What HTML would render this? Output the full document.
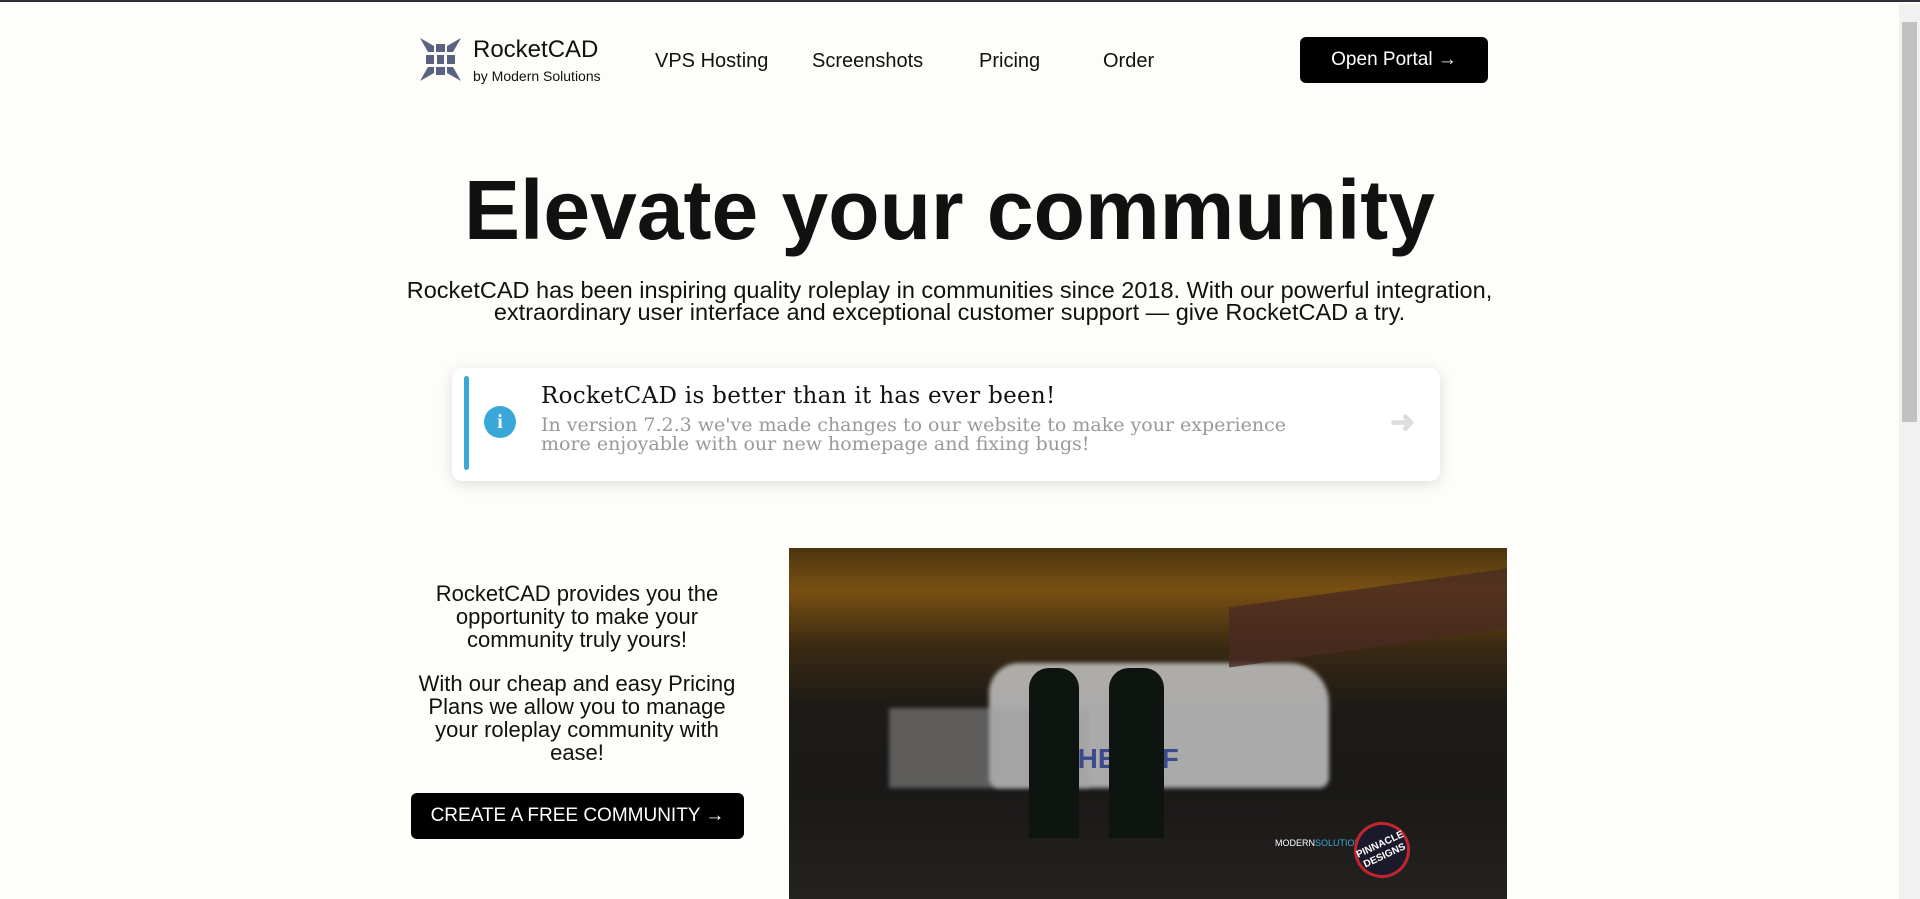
<!DOCTYPE html>
<html><head><meta charset="utf-8"><style>
*{margin:0;padding:0;box-sizing:border-box}
body{width:1920px;height:897px;overflow:hidden;background:#fdfdfa;font-family:"Liberation Sans",sans-serif;color:#111;position:relative;border-top:2px solid #2b2f38}
.abs{position:absolute}
.nav{font-size:20px;top:48px;color:#111}
.btn{background:#000;color:#fff;border-radius:6px;display:flex;align-items:center;justify-content:center;font-size:19px}
.lt{font-size:22px;line-height:23px;text-align:center;width:330px;left:412px;color:#111}
</style></head><body>
<svg class="abs" style="left:420px;top:36px" width="41" height="43" viewBox="0 0 41 43">
<g fill="#5a6282"><path d="M0 0L14 8L14 14L8 14Z"/><path d="M41 0L27 8L27 14L33 14Z"/><path d="M0 43L14 35L14 29L8 29Z"/><path d="M41 43L27 35L27 29L33 29Z"/><rect x="16" y="6" width="9" height="8"/><rect x="16" y="29" width="9" height="8"/><rect x="6" y="17" width="8" height="9"/><rect x="27" y="17" width="8" height="9"/><rect x="17" y="17" width="7" height="9"/></g></svg>
<div class="abs" style="left:473px;top:34px;font-size:24px">RocketCAD</div>
<div class="abs" style="left:473px;top:66px;font-size:14px">by Modern Solutions</div>
<div class="abs nav" style="left:655px">VPS Hosting</div>
<div class="abs nav" style="left:812px">Screenshots</div>
<div class="abs nav" style="left:979px">Pricing</div>
<div class="abs nav" style="left:1103px">Order</div>
<div class="abs btn" style="left:1300px;top:35px;width:188px;height:46px">Open Portal →</div>
<div class="abs" style="left:1899px;top:2px;width:21px;height:895px;background:#f1f1f1"></div>
<div class="abs" style="left:1902px;top:20px;width:15px;height:400px;background:#c1c1c1"></div>
<div class="abs" style="left:0;width:1899px;top:160px;text-align:center;font-size:84px;font-weight:bold">Elevate your community</div>
<div class="abs" style="left:0;width:1899px;top:277px;text-align:center;font-size:23.5px;line-height:22px">RocketCAD has been inspiring quality roleplay in communities since 2018. With our powerful integration,<br>extraordinary user interface and exceptional customer support — give RocketCAD a try.</div>
<div class="abs" style="left:452px;top:366px;width:988px;height:113px;background:#fff;border-radius:10px;box-shadow:0 3px 14px rgba(0,0,0,.13)"></div>
<div class="abs" style="left:464px;top:374px;width:5px;height:94px;background:#3aa7d9;border-radius:3px"></div>
<div class="abs" style="left:484px;top:404px;width:32px;height:32px;border-radius:50%;background:#3aa7d9;color:#fff;font-weight:bold;font-size:20px;text-align:center;line-height:32px;font-family:'Liberation Serif',serif">i</div>
<div class="abs" style="left:541px;top:381px;font-size:23px;font-family:'DejaVu Serif','Liberation Serif',serif;color:#111;letter-spacing:0.3px">RocketCAD is better than it has ever been!</div>
<div class="abs" style="left:541px;top:414px;font-size:19px;line-height:19px;font-family:'DejaVu Serif','Liberation Serif',serif;color:#999">In version 7.2.3 we've made changes to our website to make your experience<br>more enjoyable with our new homepage and fixing bugs!</div>
<div class="abs" style="left:1390px;top:403px;font-size:30px;color:#ddd;font-weight:bold">➜</div>
<div class="abs lt" style="top:580px">RocketCAD provides you the opportunity to make your community truly yours!</div>
<div class="abs lt" style="top:670px">With our cheap and easy Pricing Plans we allow you to manage your roleplay community with ease!</div>
<div class="abs btn" style="left:411px;top:791px;width:333px;height:46px;font-size:19px">CREATE A FREE COMMUNITY →</div>
<div class="abs" style="left:789px;top:546px;width:718px;height:351px;overflow:hidden;background:linear-gradient(180deg,#4a3510 0%,#7a5012 12%,#3a2a12 28%,#1d1a17 45%,#1a1918 70%,#242220 100%)">
<div class="abs" style="left:200px;top:115px;width:340px;height:125px;background:#cfcfcf;border-radius:30px 40px 10px 10px;opacity:.8;filter:blur(2px)"></div>
<div class="abs" style="left:100px;top:160px;width:200px;height:80px;background:#a0a0a0;opacity:.5;filter:blur(2px)"></div>
<div class="abs" style="left:440px;top:40px;width:278px;height:60px;background:#4a2a22;transform:skewY(-8deg);opacity:.8"></div>
<div class="abs" style="left:270px;top:195px;color:#3a4a8a;font-weight:bold;font-size:28px">SHERIFF</div>
<div class="abs" style="left:240px;top:120px;width:50px;height:170px;background:#0e1410;border-radius:20px 20px 0 0"></div>
<div class="abs" style="left:320px;top:120px;width:55px;height:170px;background:#0e1410;border-radius:20px 20px 0 0"></div>
<div class="abs" style="left:486px;top:290px;font-size:9px;color:#fff">MODERN<span style="color:#3aa7d9">SOLUTIONS</span></div>
<div class="abs" style="left:565px;top:274px;width:56px;height:56px;border-radius:50%;border:3px solid #c2252e;background:#1a1a2a;color:#fff;font-size:10px;font-weight:bold;text-align:center;line-height:12px;padding-top:14px;transform:rotate(-25deg)">PINNACLE<br>DESIGNS</div>
</div>
</body></html>
